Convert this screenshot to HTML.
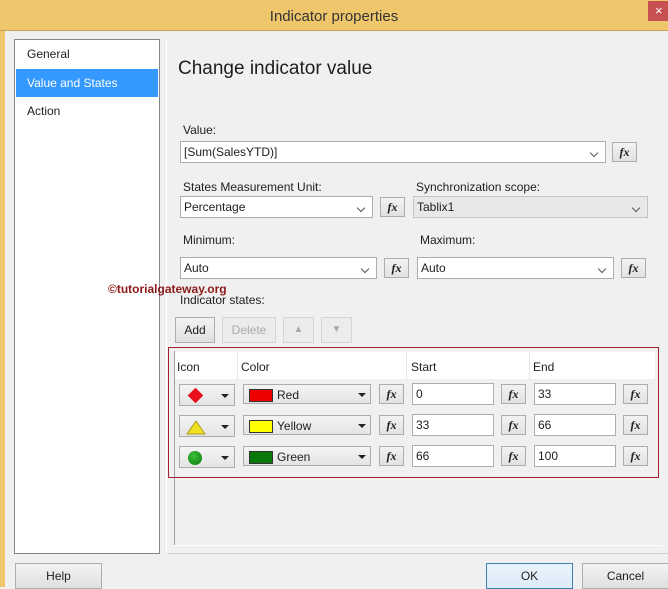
<!DOCTYPE html>
<html><head><meta charset="utf-8"><style>
*{box-sizing:border-box;margin:0;padding:0}
body{width:668px;height:587px;overflow:hidden;background:#f0f0f0;font-family:"Liberation Sans",sans-serif;font-size:12px;color:#1e1e1e;position:relative}
.a{position:absolute}
.inp{position:absolute;background:#fff;border:1px solid #abadb3;height:22px;padding:3px 3px;font-size:12px;white-space:nowrap}
.dd::after{content:"";position:absolute;right:8px;top:8px;width:5px;height:5px;border-right:1px solid #555;border-bottom:1px solid #555;transform:rotate(45deg)}
.fx{position:absolute;border:1px solid #adadad;background:linear-gradient(#f2f2f2,#e2e2e2);width:25px;height:20px;font-family:"Liberation Serif",serif;font-style:italic;font-weight:bold;font-size:12px;text-align:center;line-height:18px}
.btn{position:absolute;border:1px solid #adadad;background:linear-gradient(#f2f2f2,#e0e0e0);text-align:center;font-size:12px}
.cb{position:absolute;border:1px solid #acacac;background:linear-gradient(#f4f4f4,#e4e4e4);height:22px}
.tri{position:absolute;width:0;height:0;border-left:4px solid transparent;border-right:4px solid transparent;border-top:4px solid #222}
.sw{position:absolute;left:5px;top:4px;width:24px;height:13px;border:1px solid #333}
.lbl{position:absolute;font-size:12px}
</style></head><body>
<div class="a" style="left:0;top:0;width:668px;height:31px;background:#f0c66c;border-bottom:1px solid #c9a45a"></div>
<div class="a" style="left:0;top:8px;width:668px;text-align:center;font-size:15px;color:#333">Indicator properties</div>
<div class="a" style="left:648px;top:1px;width:20px;height:20px;background:#c75050;color:#fff;font-size:13px;line-height:20px;padding-left:7px">×</div>
<div class="a" style="left:0;top:31px;width:5px;height:556px;background:#f0c66c"></div>

<div class="a" style="left:14px;top:39px;width:146px;height:515px;background:#fff;border:1px solid #828790"></div>
<div class="a" style="left:27px;top:47px;font-size:12px">General</div>
<div class="a" style="left:16px;top:69px;width:142px;height:28px;background:#3399ff"></div>
<div class="a" style="left:27px;top:76px;color:#fff">Value and States</div>
<div class="a" style="left:27px;top:104px">Action</div>

<div class="a" style="left:166px;top:39px;width:502px;height:515px;border-bottom:1px solid #d0d0d0;border-left:1px solid #fff"></div>
<div class="a" style="left:178px;top:58px;font-size:19px;color:#1e1e1e">Change indicator value</div>

<div class="lbl" style="left:183px;top:123px">Value:</div>
<div class="inp dd" style="left:180px;top:141px;width:426px">[Sum(SalesYTD)]</div>
<div class="fx" style="left:612px;top:142px">fx</div>

<div class="lbl" style="left:183px;top:180px">States Measurement Unit:</div>
<div class="inp dd" style="left:180px;top:196px;width:193px">Percentage</div>
<div class="fx" style="left:380px;top:197px">fx</div>
<div class="lbl" style="left:416px;top:180px">Synchronization scope:</div>
<div class="inp dd" style="left:413px;top:196px;width:235px;background:#e8e8e8;border-color:#c4c4c4">Tablix1</div>

<div class="lbl" style="left:183px;top:233px">Minimum:</div>
<div class="inp dd" style="left:180px;top:257px;width:197px">Auto</div>
<div class="fx" style="left:384px;top:258px">fx</div>
<div class="lbl" style="left:420px;top:233px">Maximum:</div>
<div class="inp dd" style="left:417px;top:257px;width:197px">Auto</div>
<div class="fx" style="left:621px;top:258px">fx</div>

<div class="a" style="left:108px;top:282px;color:#8b1a1a;font-weight:bold;font-size:12px">©tutorialgateway.org</div>
<div class="lbl" style="left:180px;top:293px">Indicator states:</div>

<div class="btn" style="left:175px;top:317px;width:40px;height:26px;line-height:24px">Add</div>
<div class="btn" style="left:222px;top:317px;width:54px;height:26px;line-height:24px;color:#aaa;border-color:#d5d5d5;background:#ececec">Delete</div>
<div class="btn" style="left:283px;top:317px;width:31px;height:26px;border-color:#d5d5d5;background:#ececec;color:#aaa;line-height:24px;font-size:10px">▲</div>
<div class="btn" style="left:321px;top:317px;width:31px;height:26px;border-color:#d5d5d5;background:#ececec;color:#aaa;line-height:24px;font-size:10px">▼</div>

<div class="a" style="left:174px;top:351px;width:1px;height:194px;background:#a0a0a0"></div>
<div class="a" style="left:174px;top:545px;width:488px;height:1px;background:#fff"></div>
<div class="a" style="left:175px;top:352px;width:480px;height:27px;background:#fff"></div>
<div class="a" style="left:168px;top:347px;width:491px;height:131px;border:1px solid #a02030"></div>
<div class="lbl" style="left:177px;top:360px">Icon</div>
<div class="lbl" style="left:241px;top:360px">Color</div>
<div class="lbl" style="left:411px;top:360px">Start</div>
<div class="lbl" style="left:533px;top:360px">End</div>
<div class="a" style="left:237px;top:352px;width:1px;height:27px;background:#e6e6e6"></div>
<div class="a" style="left:406px;top:352px;width:1px;height:27px;background:#e6e6e6"></div>
<div class="a" style="left:529px;top:352px;width:1px;height:27px;background:#e6e6e6"></div>

<!-- row 1 -->
<div class="cb" style="left:179px;top:384px;width:56px"><div class="a" style="left:10px;top:5px;width:11px;height:11px;background:#e8101a;transform:rotate(45deg)"></div><div class="tri" style="left:41px;top:9px"></div></div>
<div class="cb" style="left:243px;top:384px;width:128px;height:20px"><div class="sw" style="background:#ee0000"></div><span class="a" style="left:33px;top:3px">Red</span><div class="tri" style="left:114px;top:8px"></div></div>
<div class="fx" style="left:379px;top:384px">fx</div>
<div class="inp" style="left:412px;top:383px;width:82px">0</div>
<div class="fx" style="left:501px;top:384px">fx</div>
<div class="inp" style="left:534px;top:383px;width:82px">33</div>
<div class="fx" style="left:623px;top:384px">fx</div>
<!-- row 2 -->
<div class="cb" style="left:179px;top:415px;width:56px"><svg class="a" style="left:6px;top:4px" width="20" height="15"><polygon points="10,1 19,14 1,14" fill="#f0e020" stroke="#a89a20"/></svg><div class="tri" style="left:41px;top:9px"></div></div>
<div class="cb" style="left:243px;top:415px;width:128px;height:20px"><div class="sw" style="background:#ffff00"></div><span class="a" style="left:33px;top:3px">Yellow</span><div class="tri" style="left:114px;top:8px"></div></div>
<div class="fx" style="left:379px;top:415px">fx</div>
<div class="inp" style="left:412px;top:414px;width:82px">33</div>
<div class="fx" style="left:501px;top:415px">fx</div>
<div class="inp" style="left:534px;top:414px;width:82px">66</div>
<div class="fx" style="left:623px;top:415px">fx</div>
<!-- row 3 -->
<div class="cb" style="left:179px;top:446px;width:56px"><div class="a" style="left:8px;top:4px;width:14px;height:14px;border-radius:50%;background:radial-gradient(circle at 40% 35%,#3cc03c,#0a7a0a)"></div><div class="tri" style="left:41px;top:9px"></div></div>
<div class="cb" style="left:243px;top:446px;width:128px;height:20px"><div class="sw" style="background:#087808"></div><span class="a" style="left:33px;top:3px">Green</span><div class="tri" style="left:114px;top:8px"></div></div>
<div class="fx" style="left:379px;top:446px">fx</div>
<div class="inp" style="left:412px;top:445px;width:82px">66</div>
<div class="fx" style="left:501px;top:446px">fx</div>
<div class="inp" style="left:534px;top:445px;width:82px">100</div>
<div class="fx" style="left:623px;top:446px">fx</div>

<div class="btn" style="left:15px;top:563px;width:87px;height:26px;line-height:24px">Help</div>
<div class="btn" style="left:486px;top:563px;width:87px;height:26px;line-height:24px;border-color:#3c7fb1;background:linear-gradient(#eaf3fb,#dcebf8)">OK</div>
<div class="btn" style="left:582px;top:563px;width:87px;height:26px;line-height:24px">Cancel</div>
</body></html>
